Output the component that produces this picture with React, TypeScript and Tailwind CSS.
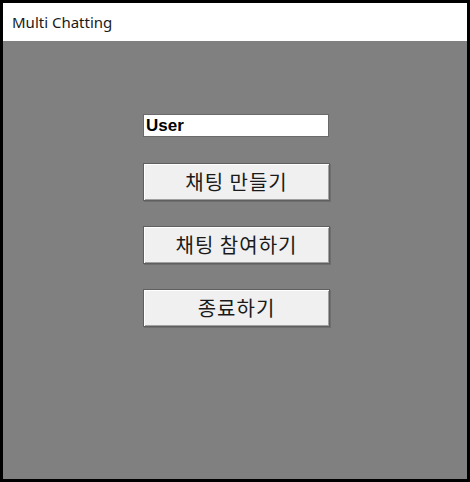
import React from "react";

const btn =
  "w-[187px] h-[38px] bg-[#f0f0f0] border border-[#5f5f5f] shadow-[inset_1px_1px_0_#ffffff,inset_-1px_-1px_0_#a0a0a0,1px_1px_0_#6e6e6e] text-[20px] tracking-[1px] text-[#1a1a1a] flex items-center justify-center leading-none";

export default function App() {
  return (
    <div className="w-[470px] h-[482px] bg-black p-[3px]">
      <div className="w-full h-full flex flex-col">
        <div className="h-[38px] bg-white flex items-center pl-[9px] text-[15px] text-[#1a1a1a]" style={{ fontFamily: '"Segoe UI", "Noto Sans", sans-serif' }}>
          Multi Chatting
        </div>
        <div className="flex-1 bg-[#808080] pt-[73px] pl-[140px] flex flex-col" style={{ fontFamily: '"Noto Sans CJK KR", "Liberation Sans", sans-serif' }}>
          <div className="w-[186px] h-[23px] bg-white border border-[#6a6a6a] flex items-center pl-[2px]">
            <span className="text-[17px] font-bold text-black leading-none" style={{ fontFamily: '"Liberation Sans", Arial, sans-serif' }}>User</span>
          </div>
          <div className="mt-[26px] flex flex-col gap-[25px]">
            <button className={btn}>채팅 만들기</button>
            <button className={btn}>채팅 참여하기</button>
            <button className={btn}>종료하기</button>
          </div>
        </div>
      </div>
    </div>
  );
}
